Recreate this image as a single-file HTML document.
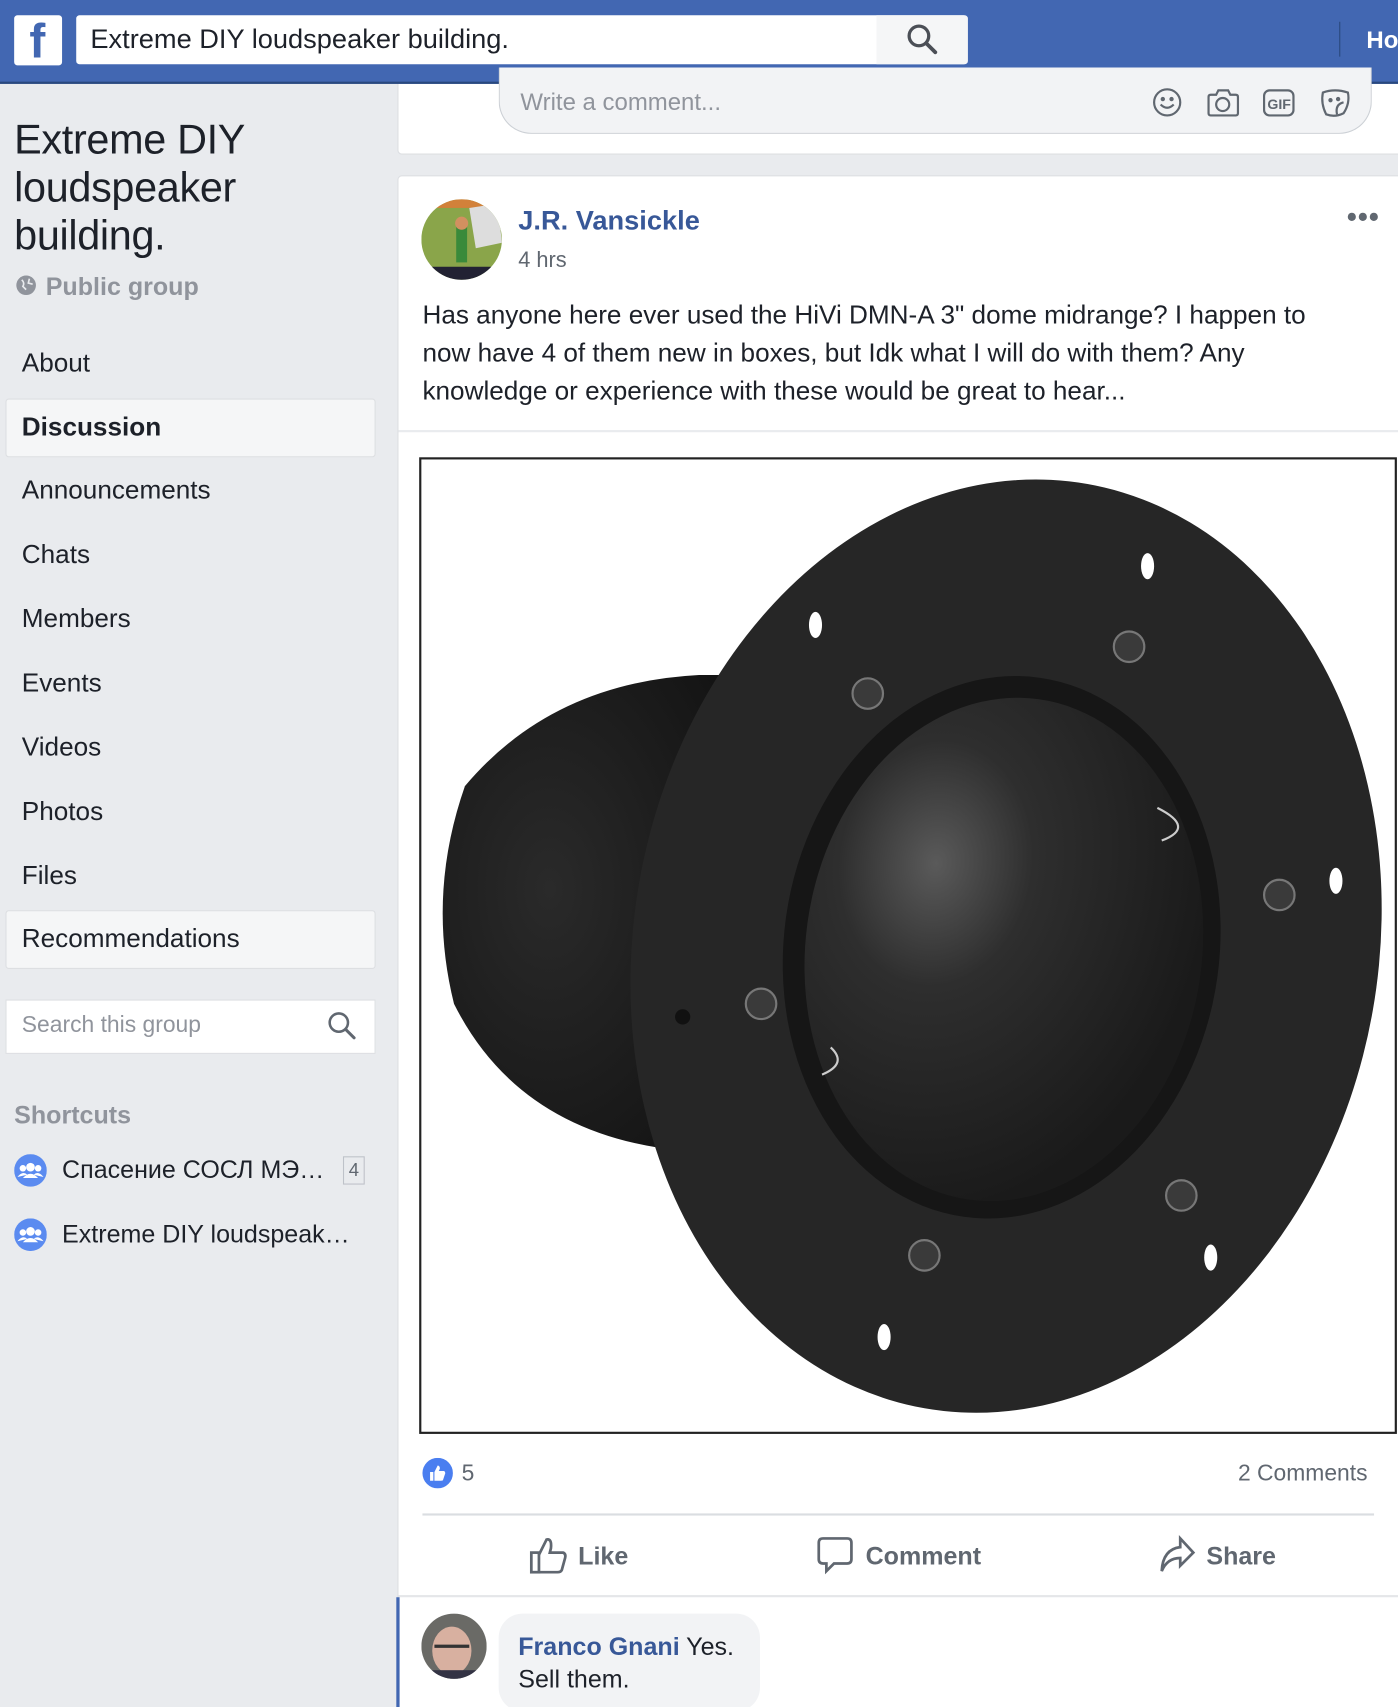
<!DOCTYPE html>
<html><head><meta charset="utf-8">
<style>
html,body{margin:0;padding:0;width:1398px;height:1707px;overflow:hidden;background:#e9ebee}
#w{width:1284px;height:1568px;transform:scale(1.08878);transform-origin:0 0;position:relative;font-family:"Liberation Sans","Noto Sans CJK SC",sans-serif;color:#1d2129;background:#e9ebee}
.abs{position:absolute}
.top{left:0;top:0;width:1284px;height:75px;background:#4267b2;border-bottom:2px solid #29487d}
.nav{font-size:24px;color:#1d2129;left:20px}
.sel{background:#f5f6f7;border:1px solid #dddfe2;border-radius:3px;left:5px;width:338px;height:52px}
.card{background:#fff;border:1px solid #dddfe2;border-radius:4px}
</style></head><body><div id="w">
<div class="abs card" style="left:365px;top:60px;width:930px;height:80px"></div>
<div class="abs top"></div>
<div class="abs" style="left:13px;top:14px;width:44px;height:46px;background:#fff;border-radius:3px"></div>
<div class="abs" style="left:27px;top:14px;font:bold 44px 'Liberation Sans';color:#4267b2;line-height:50px">f</div>
<div class="abs" style="left:70px;top:14px;width:818px;height:45px;background:#fff;border-radius:3px"></div>
<div class="abs" style="left:805px;top:14px;width:84px;height:45px;background:#f5f6f7;border-radius:0 3px 3px 0"></div>
<div class="abs" style="left:83px;top:22px;font-size:25px">Extreme DIY loudspeaker building.</div>
<svg class="abs" style="left:832px;top:21px" width="30" height="30" viewBox="0 0 30 30"><circle cx="12" cy="12" r="9" fill="none" stroke="#4b4f56" stroke-width="3"/><line x1="19" y1="19" x2="27" y2="27" stroke="#4b4f56" stroke-width="3.5" stroke-linecap="round"/></svg>
<div class="abs" style="left:1230px;top:20px;width:1px;height:32px;background:#29487d"></div>
<div class="abs" style="left:1255px;top:24px;font:bold 22px 'Liberation Sans';color:#fff">Ho</div>

<div class="abs" style="left:13px;top:107px;font-size:38px;line-height:44px;letter-spacing:-0.3px">Extreme DIY<br>loudspeaker<br>building.</div>
<svg class="abs" style="left:14px;top:252px" width="20" height="20"><circle cx="10" cy="10" r="9" fill="#90949c"/><path d="M6 5 Q9 8 7 11 L10 14 M13 4 L12 8 L16 9" stroke="#e9ebee" stroke-width="1.5" fill="none"/></svg>
<div class="abs" style="left:42px;top:250px;font:bold 23px 'Liberation Sans';color:#90949c">Public group</div>
<div class="abs nav" style="top:320px">About</div>
<div class="abs sel" style="top:366px"></div>
<div class="abs nav" style="top:379px;font-weight:bold">Discussion</div>
<div class="abs nav" style="top:437px">Announcements</div>
<div class="abs nav" style="top:496px">Chats</div>
<div class="abs nav" style="top:555px">Members</div>
<div class="abs nav" style="top:614px">Events</div>
<div class="abs nav" style="top:673px">Videos</div>
<div class="abs nav" style="top:732px">Photos</div>
<div class="abs nav" style="top:791px">Files</div>
<div class="abs sel" style="top:836px"></div>
<div class="abs nav" style="top:849px">Recommendations</div>
<div class="abs" style="left:5px;top:918px;width:338px;height:48px;background:#fff;border:1px solid #dddfe2"></div>
<div class="abs" style="left:20px;top:930px;font-size:21px;color:#90949c">Search this group</div>
<svg class="abs" style="left:300px;top:928px" width="28" height="28" viewBox="0 0 30 30"><circle cx="12" cy="12" r="9" fill="none" stroke="#606770" stroke-width="2.5"/><line x1="19" y1="19" x2="27" y2="27" stroke="#606770" stroke-width="3" stroke-linecap="round"/></svg>
<div class="abs" style="left:13px;top:1011px;font:bold 23px 'Liberation Sans';color:#90949c">Shortcuts</div>
<svg class="abs" style="left:13px;top:1060px" width="30" height="30"><circle cx="15" cy="15" r="15" fill="#5b8bf0"/><circle cx="15" cy="12" r="4" fill="#fff"/><circle cx="8" cy="13" r="3" fill="#fff"/><circle cx="22" cy="13" r="3" fill="#fff"/><path d="M8 22 Q15 14 22 22Z M3 21 Q8 15 12 19Z M18 19 Q22 15 27 21Z" fill="#fff"/></svg>
<div class="abs" style="left:57px;top:1061px;font-size:23px">Спасение СОСЛ МЭ…</div>
<div class="abs" style="left:315px;top:1062px;width:18px;height:24px;border:1px solid #bec2c9;font-size:17px;color:#606770;text-align:center;line-height:24px">4</div>
<svg class="abs" style="left:13px;top:1119px" width="30" height="30"><circle cx="15" cy="15" r="15" fill="#5b8bf0"/><circle cx="15" cy="12" r="4" fill="#fff"/><circle cx="8" cy="13" r="3" fill="#fff"/><circle cx="22" cy="13" r="3" fill="#fff"/><path d="M8 22 Q15 14 22 22Z M3 21 Q8 15 12 19Z M18 19 Q22 15 27 21Z" fill="#fff"/></svg>
<div class="abs" style="left:57px;top:1120px;font-size:23px">Extreme DIY loudspeak…</div>

<div class="abs" style="left:458px;top:62px;width:800px;height:60px;background:#f2f3f5;border:1px solid #ccd0d5;border-top:none;border-radius:0 0 30px 30px"></div>
<div class="abs" style="left:478px;top:81px;font-size:22px;color:#90949c">Write a comment...</div>
<svg class="abs" style="left:1056px;top:78px" width="190" height="32" viewBox="0 0 190 32" fill="none" stroke="#606770" stroke-width="2">
<circle cx="16" cy="16" r="12"/><circle cx="12" cy="13" r="1" fill="#606770"/><circle cx="20" cy="13" r="1" fill="#606770"/><path d="M10 18 Q16 24 22 18"/>
<path d="M56 9 H61 L63 5 H72 L74 9 H79 Q81 9 81 11 V26 Q81 28 79 28 H56 Q54 28 54 26 V11 Q54 9 56 9Z"/><circle cx="67" cy="18" r="6"/>
<rect x="105" y="5" width="27" height="23" rx="5"/><text x="108" y="22" font-family="Liberation Sans" font-size="13" font-weight="bold" fill="#606770" stroke="none">GIF</text>
<path d="M159 7 Q170 3 182 7 Q184 17 178 26 Q170 30 162 27 Q157 17 159 7Z"/><path d="M178 16 Q170 18 172 27"/><circle cx="166" cy="14" r="1" fill="#606770"/><circle cx="173" cy="13" r="1" fill="#606770"/>
</svg>

<div class="abs card" style="left:365px;top:161px;width:930px;height:1420px"></div>
<svg class="abs" style="left:387px;top:183px" width="74" height="74"><defs><clipPath id="c1"><circle cx="37" cy="37" r="37"/></clipPath></defs><g clip-path="url(#c1)"><rect width="74" height="74" fill="#8aa54a"/><rect x="0" y="0" width="74" height="8" fill="#d2813a"/><path d="M44 8 L70 4 L74 40 L50 45Z" fill="#ddd"/><rect x="32" y="22" width="10" height="36" fill="#3a8a3a"/><circle cx="37" cy="22" r="6" fill="#d29060"/><rect y="62" width="74" height="12" fill="#223"/></g></svg>
<div class="abs" style="left:476px;top:189px;font:bold 25px 'Liberation Sans';color:#385898">J.R. Vansickle</div>
<div class="abs" style="left:476px;top:228px;font-size:20px;color:#606770">4 hrs</div>
<div class="abs" style="left:1237px;top:184px;font:bold 26px 'Liberation Sans';color:#606770;letter-spacing:1px">•••</div>
<div class="abs" style="left:388px;top:272px;width:860px;font-size:24px;line-height:35px">Has anyone here ever used the HiVi DMN-A 3" dome midrange? I happen to now have 4 of them new in boxes, but Idk what I will do with them? Any knowledge or experience with these would be great to hear...</div>
<div class="abs" style="left:366px;top:395px;width:918px;height:2px;background:#e9ebee"></div>
<div class="abs" style="left:385px;top:420px;width:894px;height:893px;border:2px solid #222;background:#fff;overflow:hidden">
<svg width="894" height="893" viewBox="0 0 894 893">
<defs><radialGradient id="cone" cx="0.35" cy="0.45" r="0.7"><stop offset="0" stop-color="#2a2a2a"/><stop offset="1" stop-color="#141414"/></radialGradient>
<radialGradient id="dome" cx="0.3" cy="0.35" r="0.7"><stop offset="0" stop-color="#5a5a5a"/><stop offset="0.35" stop-color="#2e2e2e"/><stop offset="1" stop-color="#1a1a1a"/></radialGradient></defs>
<path d="M255 198 Q120 205 40 300 Q5 400 30 500 Q90 620 240 635 L300 630 L300 198Z" fill="url(#cone)"/>
<ellipse cx="537" cy="447" rx="342" ry="431" transform="rotate(10 537 447)" fill="#262626"/>
<ellipse cx="533" cy="448" rx="200" ry="250" transform="rotate(8 533 448)" fill="#161616"/>
<ellipse cx="535" cy="450" rx="182" ry="232" transform="rotate(8 535 450)" fill="url(#dome)"/>
<path d="M676 320 Q712 338 680 350" stroke="#ccc" stroke-width="2" fill="none"/>
<path d="M376 540 Q392 555 368 565" stroke="#ccc" stroke-width="2" fill="none"/>
<g fill="#fff"><ellipse cx="667" cy="98" rx="6" ry="12"/><ellipse cx="362" cy="152" rx="6" ry="12"/><ellipse cx="840" cy="387" rx="6" ry="12"/><ellipse cx="725" cy="733" rx="6" ry="12"/><ellipse cx="425" cy="806" rx="6" ry="12"/></g>
<g fill="#3a3a3a" stroke="#777" stroke-width="2"><circle cx="650" cy="172" r="14"/><circle cx="410" cy="215" r="14"/><circle cx="788" cy="400" r="14"/><circle cx="312" cy="500" r="14"/><circle cx="698" cy="676" r="14"/><circle cx="462" cy="731" r="14"/></g>
<circle cx="240" cy="512" r="7" fill="#111"/>
</svg></div>
<svg class="abs" style="left:388px;top:1339px" width="28" height="28"><circle cx="14" cy="14" r="14" fill="#4a7ef0"/><path d="M7 13 H10 V21 H7Z M11 13 L14 7 Q16 7 16 10 L15 12 H20 Q21 13 21 14 L19 20 Q19 21 17 21 H11Z" fill="#fff"/></svg>
<div class="abs" style="left:424px;top:1342px;font-size:21px;color:#606770">5</div>
<div class="abs" style="left:1137px;top:1342px;font-size:21px;color:#606770">2 Comments</div>
<div class="abs" style="left:388px;top:1390px;width:874px;height:2px;background:#dadde1"></div>
<svg class="abs" style="left:486px;top:1410px" width="36" height="36" viewBox="0 0 36 36" fill="none" stroke="#606770" stroke-width="2.5"><rect x="2" y="16" width="7" height="18"/><path d="M9 18 L16 4 Q21 3 20 12 L19 16 H31 Q34 17 33 21 L30 32 Q29 34 26 34 H9"/></svg>
<div class="abs" style="left:531px;top:1416px;font:bold 23px 'Liberation Sans';color:#606770">Like</div>
<svg class="abs" style="left:750px;top:1410px" width="34" height="36" viewBox="0 0 34 36" fill="none" stroke="#606770" stroke-width="2.5"><path d="M6 3 H28 Q32 3 32 7 V22 Q32 26 28 26 H16 L9 33 V26 H6 Q2 26 2 22 V7 Q2 3 6 3Z"/></svg>
<div class="abs" style="left:795px;top:1416px;font:bold 23px 'Liberation Sans';color:#606770">Comment</div>
<svg class="abs" style="left:1064px;top:1410px" width="34" height="36" viewBox="0 0 34 36" fill="none" stroke="#606770" stroke-width="2.5"><path d="M20 3 L32 16 L20 28 V21 Q8 21 3 33 Q4 13 20 11Z"/></svg>
<div class="abs" style="left:1108px;top:1416px;font:bold 23px 'Liberation Sans';color:#606770">Share</div>
<div class="abs" style="left:366px;top:1465px;width:918px;height:2px;background:#e5e6e9"></div>
<div class="abs" style="left:364px;top:1467px;width:3px;height:101px;background:#4267b2"></div>
<svg class="abs" style="left:387px;top:1482px" width="60" height="60"><defs><clipPath id="c2"><circle cx="30" cy="30" r="30"/></clipPath></defs><g clip-path="url(#c2)"><rect width="60" height="60" fill="#6a6a66"/><ellipse cx="28" cy="34" rx="18" ry="22" fill="#d8b0a0"/><path d="M12 30 H44" stroke="#333" stroke-width="3"/><rect x="0" y="52" width="60" height="8" fill="#334"/></g></svg>
<div class="abs" style="left:458px;top:1482px;width:240px;height:90px;background:#f2f3f5;border-radius:22px"></div>
<div class="abs" style="left:476px;top:1497px;font-size:23px;line-height:30px"><b style="color:#385898">Franco Gnani</b> Yes.<br>Sell them.</div>
</div></body></html>
